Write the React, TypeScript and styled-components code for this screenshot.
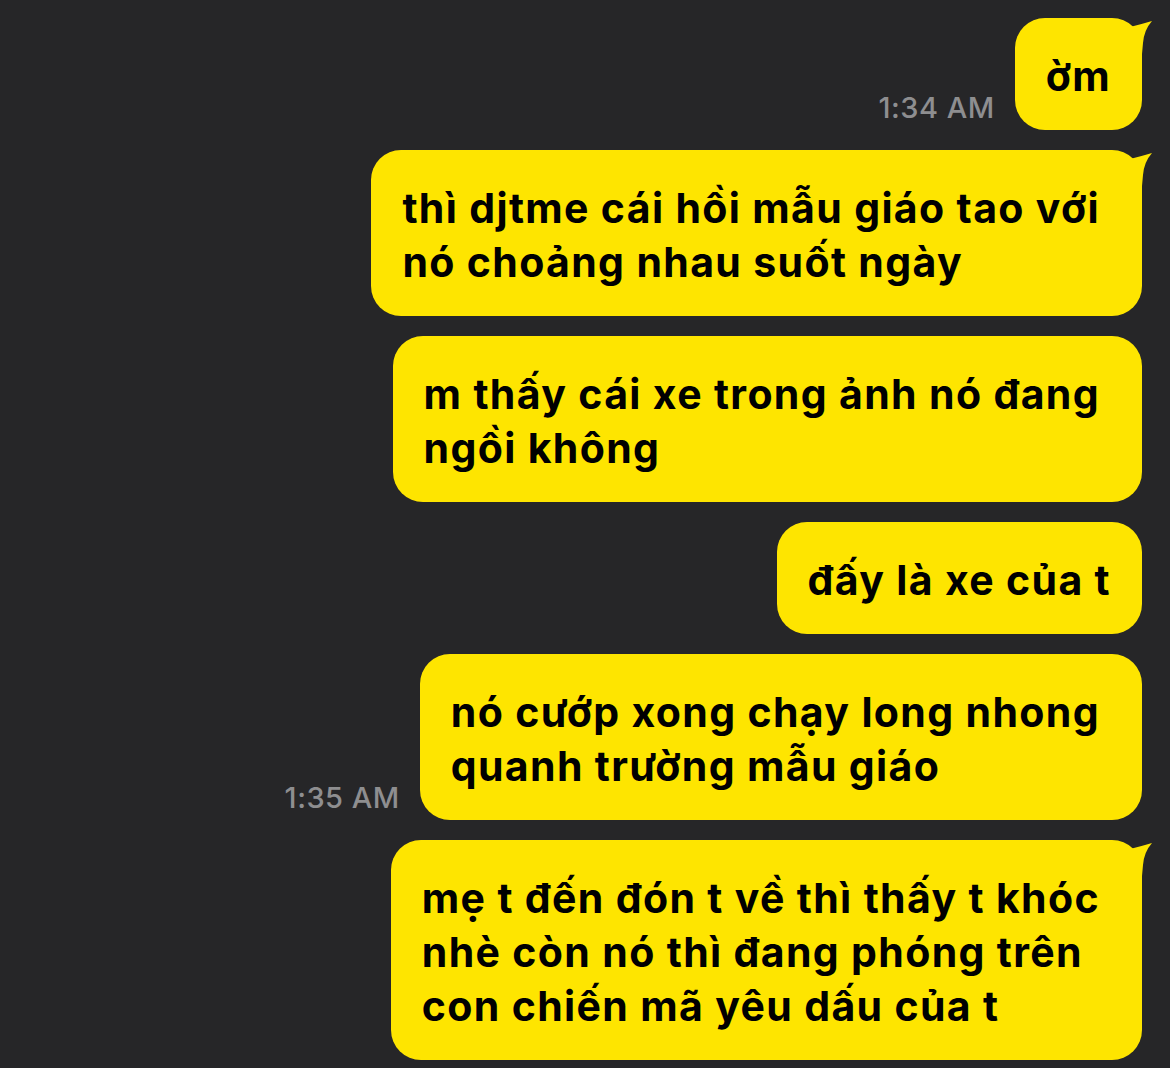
import React from 'react'
import styled, { createGlobalStyle } from 'styled-components'

type Message = {
  lines: string[]
  time?: string
  tail?: boolean
}

const messages: Message[] = [
  { lines: ['ờm'], time: '1:34 AM', tail: true },
  { lines: ['thì djtme cái hồi mẫu giáo tao với', 'nó choảng nhau suốt ngày'], tail: true },
  { lines: ['m thấy cái xe trong ảnh nó đang', 'ngồi không'] },
  { lines: ['đấy là xe của t'] },
  { lines: ['nó cướp xong chạy long nhong', 'quanh trường mẫu giáo'], time: '1:35 AM' },
  { lines: ['mẹ t đến đón t về thì thấy t khóc', 'nhè còn nó thì đang phóng trên', 'con chiến mã yêu dấu của t'], tail: true },
]

const GlobalStyle = createGlobalStyle`
  html, body {
    margin: 0;
    padding: 0;
    background: #262628;
  }
  body {
    font-family: Inter, "Noto Sans", "DejaVu Sans", sans-serif;
  }
`

const Chat = () => {
  return (
    <ChatPage>
      {messages.map((m, i) => (
        <Row key={i}>
          {m.time ? <Time>{m.time}</Time> : null}
          <Bubble>
            {/* wrapped lines keep their trailing space, like the phone does */}
            {m.lines.map((l, j) => (
              <Line key={j}>{j < m.lines.length - 1 ? l + ' ' : l}</Line>
            ))}
            {m.tail ? (
              <Tail viewBox="0 0 40 36">
                <path d="M14 9 Q26 6 36 3 Q28 12 27 25 L26 36 L4 36 L4 20 Z" />
              </Tail>
            ) : null}
          </Bubble>
        </Row>
      ))}
    </ChatPage>
  )
}

const App = () => (
  <>
    <GlobalStyle />
    <Chat />
  </>
)

const ChatPage = styled.main`
  width: 1170px;
  height: 1068px;
  overflow: hidden;
  box-sizing: border-box;
  padding: 18px 28px 0 0;
  display: flex;
  flex-direction: column;
  align-items: flex-end;
  gap: 20px;
  background: #262628;
`
const Row = styled.div`
  display: flex;
  align-items: flex-end;
  gap: 20px;
`
const Time = styled.span`
  font-size: 29px;
  line-height: 34px;
  font-weight: 500;
  letter-spacing: 0.5px;
  color: #8e8e90;
  margin-bottom: 5px;
  white-space: nowrap;
`
const Bubble = styled.div`
  position: relative;
  background: #fee500;
  border-radius: 30px;
  padding: 31px 31px 27px;
  color: #000;
  font-size: 41px;
  line-height: 54px;
  font-weight: 700;
  letter-spacing: 1.35px;
`
const Line = styled.div`
  white-space: pre;
`
const Tail = styled.svg`
  position: absolute;
  top: 0;
  right: -14px;
  width: 40px;
  height: 36px;
  fill: #fee500;
`

export default App
